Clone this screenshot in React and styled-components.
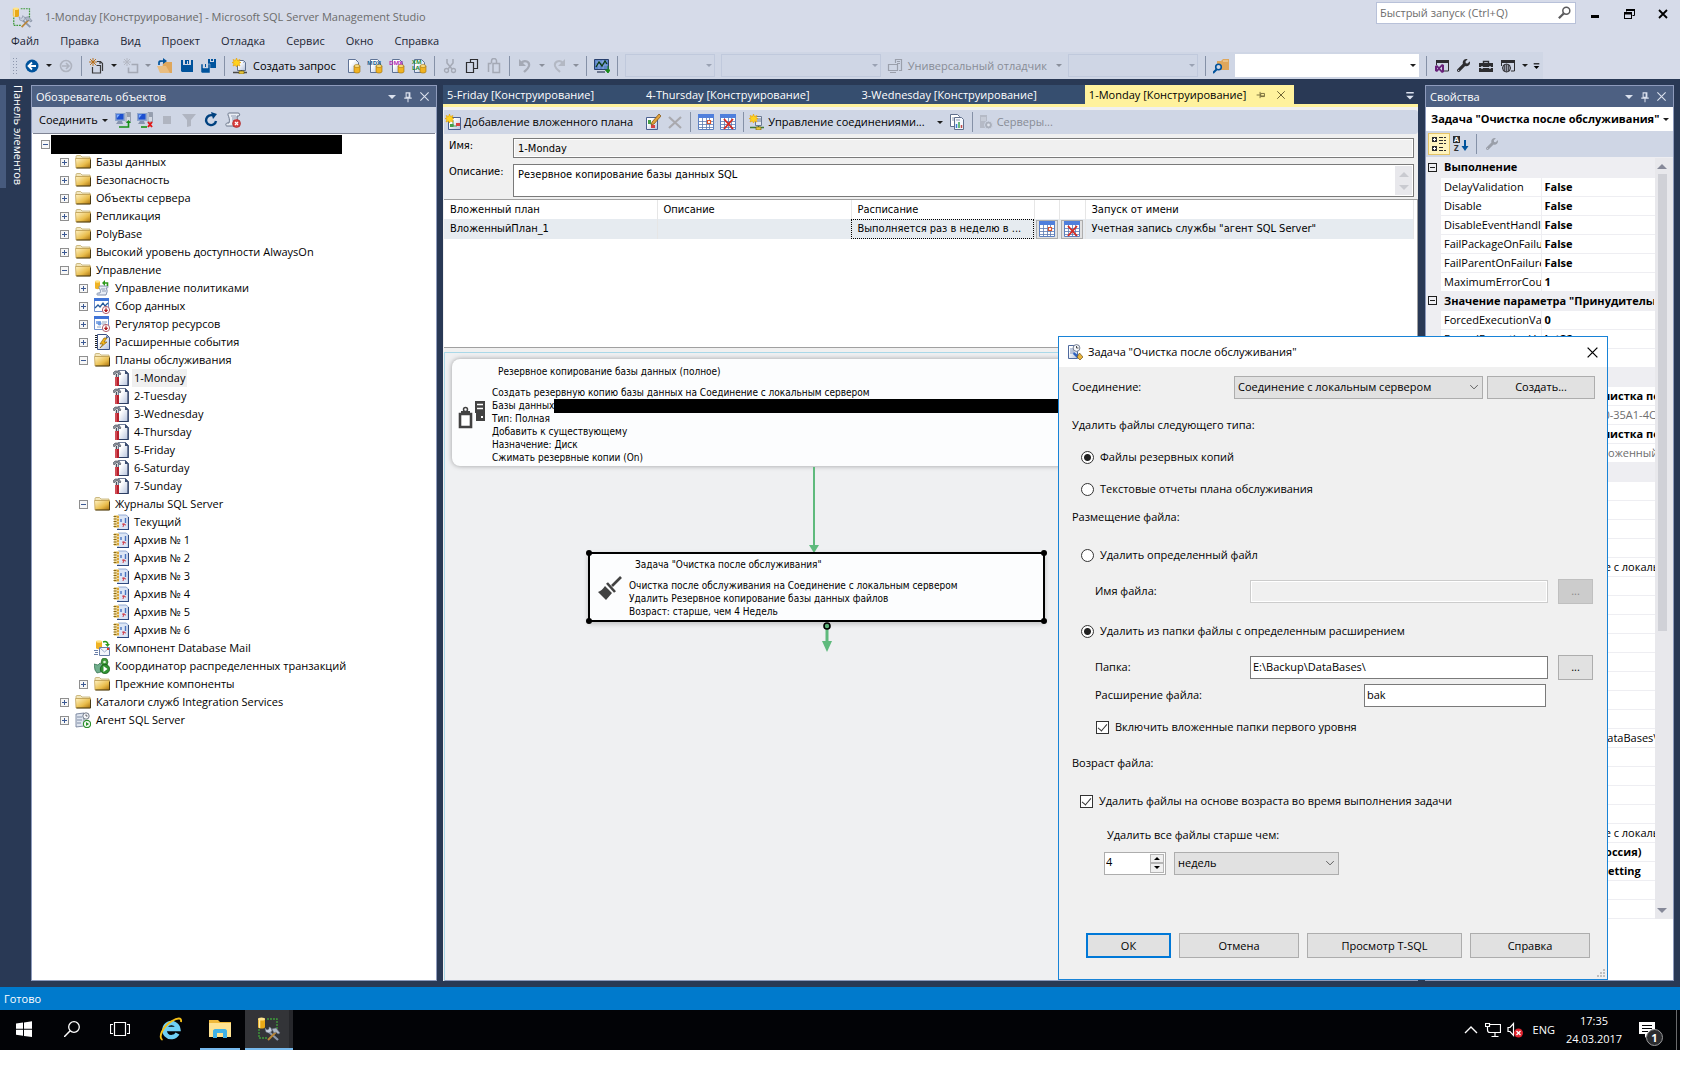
import React, { useState } from 'react'
import styled, { createGlobalStyle, css } from 'styled-components'
import { FaWrench } from 'react-icons/fa'

const GlobalStyle = createGlobalStyle`
  * {
    box-sizing: border-box;
  }

  body {
    margin: 0;
    background: #fff;
    color: #000;
    font-family: "Open Sans", "Noto Sans", sans-serif;
    font-size: 11px;
    line-height: 16px;
  }

  button, input, select, textarea {
    font: inherit;
    color: inherit;
    margin: 0;
    border-radius: 0;
    outline: none;
  }
`

const formFont = '"DejaVu Sans Condensed", "Open Sans", sans-serif'

/* ---------- icons ---------- */

const Svg = styled.svg`
  display: block;
  flex: none;
`

const GradientDefs = styled.svg`
  position: absolute;
  width: 0;
  height: 0;
`

const page = <path d="M3.5 1.5h7l3 3v10h-10z" fill="url(#pageFill)" stroke="#5f7396" />
const star = <path d="M4.5 0l1 2.5 2.5-1-1 2.5 2 .5-2 1 1 2.5-2.5-1-1 2-1-2-2.5 1 1-2.5-2-1 2-.5-1-2.5 2.5 1z" fill="#ffd21e" stroke="#e8a000" strokeWidth=".6" />
const cylinder = (
  <g>
    <path d="M9 8v5.5c0 2 6 2 6 0V8z" fill="#f0b323" stroke="#9a6b08" strokeWidth=".6" />
    <ellipse cx="12" cy="8" rx="3" ry="1.4" fill="#ffe48a" stroke="#9a6b08" strokeWidth=".6" />
  </g>
)
const calendar = (
  <g>
    <path d="M.5.5h15v15H.5z" fill="#fff" stroke="#5b7fc0" />
    <path d="M0 0h16v4H0z" fill="#4f7fdc" />
    <path d="M1 7.5h14M1 10.5h14M1 13.5h14M4.5 4v11M8.5 4v11M11.5 4v11" stroke="#5c78b0" strokeWidth=".8" />
  </g>
)
const monitorPair = (
  <g>
    <path d="M0 1h10v8H0z" fill="#8fa6cc" />
    <path d="M1.5 2h7v5.5h-7z" fill="#1c4fd0" />
    <path d="M2 2.5h3L2 6z" fill="#7fb0ff" />
    <path d="M3 9h4l1 3H1z" fill="#8795b0" />
    <path d="M11 .5h4.500v9.500H11z" fill="#d3d8e2" stroke="#7c8799" strokeWidth=".7" />
    <path d="M12 2h3M12 4h3" stroke="#59657a" />
  </g>
)
const chartWindow = (
  <g>
    <path d="M.5.5h14v13H.5z" fill="#fff" stroke="#6d8fcf" />
    <path d="M0 0h15v3H0z" fill="#3f74d8" />
  </g>
)
const redArrowBadge = (
  <g>
    <circle cx="12" cy="12" r="3.6" fill="#fff" stroke="#b06070" />
    <path d="M12 9.5V13M10.5 12l1.5 2 1.5-2z" stroke="#b01c20" fill="#b01c20" />
  </g>
)

const icons = {
  back: <><circle cx="8" cy="8" r="6.5" fill="#00539c" /><path d="M12 8H5M8 4.5L4.5 8 8 11.5" stroke="#fff" strokeWidth="1.8" fill="none" /></>,
  forward: <><circle cx="8" cy="8" r="5.5" fill="none" stroke="#aeb3bf" strokeWidth="1.6" /><path d="M4 8h7M8 5l3 3-3 3" stroke="#aeb3bf" strokeWidth="1.6" fill="none" /></>,
  newProject: <><path d="M3.500 9v6h8V7.500h-4" fill="none" stroke="#3a3a3c" strokeWidth="1.200" /><path d="M8 3.500h3.500l2 2V13M11 3v3" fill="none" stroke="#3a3a3c" strokeWidth="1.200" /><path d="M4 0v8M0 4h8M1 1l6 6M7 1L1 7" stroke="#b5690f" strokeWidth=".9" /></>,
  addItem: <><path d="M8.5 6.5h6v8h-9v-5" fill="none" stroke="#a4a9b5" strokeWidth="1.6" /><path d="M4 0v8M0 4h8M1 1l6 6M7 1L1 7" stroke="#b4b8c3" /></>,
  openFolder: <><path d="M6 4h9v11H5z" fill="#dfa75c" /><path d="M0 8h9l4 7H3z" fill="#e9bd80" /><path d="M2 7V4.500C2 3 3 3 7 3" fill="none" stroke="#00539c" strokeWidth="1.700" /><path d="M6 0l4 3-4 3z" fill="#00539c" /></>,
  save: <path d="M2 2h2v5h8V2h2v12H3l-1-1zM6 2h4v4H9V3H8v3H6z" fill="#00539c" />,
  saveAll: <><path d="M7 1h2v3h4V1h2v9H8L7 9z" fill="#00539c" /><path d="M0 6h2v4h5V6h2v9H1l-1-1z" fill="#00539c" stroke="#cfd6e5" strokeWidth=".5" /><path d="M10 1h2v2h-2zM4 6h1v3H4z" fill="#00539c" /></>,
  newQuery: <><path d="M5.5 2.5h6l2 2v8h-8z" fill="url(#pageFill)" stroke="#5f6f8c" /><path d="M11 3l2 2h-2z" fill="#9fb0cf" /><path d="M1 14.5h14M9.5 12v2" stroke="#4a4a4a" strokeWidth="1.5" /><path d="M7 13h5v3H7z" fill="#e9c53a" stroke="#6a5a10" strokeWidth=".6" />{star}</>,
  dbQuery: <>{page}{cylinder}</>,
  mdx: <>{page}{cylinder}<text x="0" y="7" fontSize="6" fontWeight="700" fill="#1f5f8f">MDX</text></>,
  dmx: <>{page}{cylinder}<text x="0" y="7" fontSize="6" fontWeight="700" fill="#b52ab5">DMX</text></>,
  xmla: <>{page}{cylinder}<text x="1" y="6" fontSize="6" fontWeight="700" fill="#1d8a35">XM</text><text x="1" y="12" fontSize="6" fontWeight="700" fill="#1d8a35">LA</text></>,
  cut: <><path d="M5 1v4l5 6M11 1v4l-5 6" fill="none" stroke="#a4a9b5" strokeWidth="1.5" /><circle cx="4.5" cy="12.5" r="2" fill="none" stroke="#a4a9b5" strokeWidth="1.3" /><circle cx="11.5" cy="12.5" r="2" fill="none" stroke="#a4a9b5" strokeWidth="1.3" /></>,
  copy: <path d="M6.500 4.500v-3h7v9h-4M2.500 4.500h7v10h-7z" fill="none" stroke="#2d2d30" strokeWidth="1.200" />,
  paste: <><path d="M7 9.5v5h6.5v-9H7z" fill="none" stroke="#a4a9b5" strokeWidth="1.5" /><path d="M2.5 14V5.5h3M5.5 5V3a2.500 2.500 0 015 0v2" fill="none" stroke="#a4a9b5" strokeWidth="1.5" /></>,
  undo: <><path d="M4 5c4-4 9-1 8 3-1 3-3 4-5 6" fill="none" stroke="#a4a9b5" strokeWidth="2.2" /><path d="M2 1v7h7z" fill="#a4a9b5" /></>,
  redo: <><path d="M12 5C8 1 3 4 4 8c1 3 3 4 5 6" fill="none" stroke="#b3b8c3" strokeWidth="2" /><path d="M14 1v7H7z" fill="#b3b8c3" /></>,
  activity: <><path d="M.5 1.5h14v10H.5z" fill="#5d86c9" stroke="#28406e" /><path d="M2 4h11M2 7h11M5 2v9M9 2v9" stroke="#a9c3f0" strokeWidth=".6" /><path d="M2 9l3-5 3 4 3-5 2 3" fill="none" stroke="#0c3b14" strokeWidth="1.3" /><path d="M3 14h8" stroke="#6e7890" strokeWidth="2" /><path d="M14 8v6M11.5 12l2.500 3 2-3z" stroke="#1a8a1a" fill="#1a8a1a" /></>,
  debugger: <path d="M1.5 6.5h9v6h-9zM3 14.5h6M8.5 5V1.5h6v11H12M10 3.5h3M10 5.5h3" fill="none" stroke="#9a9fab" strokeWidth="1.2" />,
  findFolder: <><path d="M4 3h4l2-2h6v11H4z" fill="#dfa75c" /><path d="M10 3h5" stroke="#f3d9b0" /><circle cx="5.500" cy="9" r="2.800" fill="#cfd6e5" stroke="#00539c" strokeWidth="1.600" /><path d="M3.500 11.500L0 15" stroke="#00539c" strokeWidth="2" /></>,
  vsWindow: <><path d="M2 2h13v3H2z" fill="#2d2d30" /><path d="M2.5 7V3M14.5 3v10H10" fill="none" stroke="#2d2d30" /><path d="M1 8l2-1 2 2 3-3 2 1v7l-2 1-3-3-2 2-2-1z" fill="#68217a" /><path d="M3 9.5v2l1-1zM8 8.5v4l-2-2z" fill="#cfd6e5" /></>,
  toolbox: <><path d="M5.5 5V3.500h5V5" fill="none" stroke="#2d2d30" strokeWidth="1.4" /><path d="M1 5h14v4H1zM1 10h14v4H1z" fill="#2d2d30" /><path d="M4 8v3M12 8v3" stroke="#cfd6e5" strokeWidth="1.3" /></>,
  webWindow: <><path d="M1 2h14v3H1z" fill="#2d2d30" /><path d="M1.5 3v5M14.5 3v10H11" fill="none" stroke="#2d2d30" /><circle cx="6.5" cy="10" r="4" fill="#cfd6e5" stroke="#2d2d30" /><path d="M2.5 10h8M6.5 6v8M3 8h7M3 12h7M4.5 7v6M8.5 7v6" stroke="#2d2d30" strokeWidth=".7" /></>,
  connect: <>{monitorPair}<path d="M4 15h9.5V9" fill="none" stroke="#169016" strokeWidth="1.6" /><path d="M11 11l2.500-3 2.500 3z" fill="#169016" /></>,
  disconnect: <>{monitorPair}<path d="M4 15h6" stroke="#169016" strokeWidth="1.6" /><path d="M11 10l4 5M15 10l-4 5" stroke="#e01818" strokeWidth="2" /></>,
  stop: <path d="M4 4h8v8H4z" fill="#b0b5c1" />,
  filter: <path d="M1 2h14l-5 6v6l-4 1V8z" fill="#b0b5c1" />,
  refresh: <><path d="M13 9a5 5 0 11-3-5.500" fill="none" stroke="#00417f" strokeWidth="2.4" /><path d="M8 0l6 2-4 5z" fill="#00417f" /></>,
  scriptError: <><path d="M4 1h9c2 0 2 2 1 3h-2c1 4 0 7-2 10H2c-2 0-1-3 0-3h2C5 8 4 5 3 3c0-1 0-2 1-2z" fill="#e9edf4" stroke="#606b80" strokeWidth=".9" /><path d="M6 4h5M7 6h5M7 8h3" stroke="#8f9bb3" /><circle cx="11.5" cy="11.5" r="4" fill="#d94040" stroke="#a02020" strokeWidth=".6" /><path d="M10 10l3 3M13 10l-3 3" stroke="#fff" strokeWidth="1.3" /></>,
  folder: <><path d="M1 4.500V2.500C1 2 1.500 1.500 2 1.500h3.500L7 3h8v2z" fill="#f3e7bd" stroke="#b9a15a" strokeWidth=".7" /><path d="M.5 4.500h15v9.500H1z" fill="url(#folderFill)" stroke="#b08c38" strokeWidth=".6" /><path d="M1.500 14H15.500V5.500" fill="none" stroke="#3d2f0c" strokeWidth=".9" /></>,
  policy: <><path d="M1 1v7c0 1.500 5 1.500 5 0V1z" fill="#f0b323" /><ellipse cx="3.5" cy="1.5" rx="2.5" ry="1.2" fill="#ffe48a" /><path d="M6 6h7c2 0 1 2 0 2h-1c2 3 1 4 0 7H4c-2 0-1-2 0-2h2c1-2 0-4-1-5 0-1 0-2 1-2z" fill="#e7ecf5" stroke="#7487a6" strokeWidth=".9" /><path d="M7 9h4M8 11h4" stroke="#8f9bb3" /><path d="M13.5 6V3H10" fill="none" stroke="#2d9a1c" strokeWidth="1.6" /><path d="M11 0v6L8 3z" fill="#2d9a1c" /></>,
  collection: <>{chartWindow}<path d="M1 10l3-3 2 2 3-4 2 3 3-3" fill="none" stroke="#24599c" strokeWidth="1.3" />{redArrowBadge}</>,
  governor: <>{chartWindow}<path d="M2 5h5v3H2z" fill="#8fb0e8" /><circle cx="5.5" cy="7.5" r="2" fill="#6b9ae0" /><path d="M8 6h5M8 8h4M3 11h4" stroke="#94a4bf" />{redArrowBadge}</>,
  events: <><path d="M3.5.5h9l3 3v12h-12z" fill="url(#pageFill)" stroke="#3b5286" /><path d="M2 1v14" stroke="#222" strokeDasharray="1 1" strokeWidth="2" /><path d="M12 1v3h3z" fill="#5c74a8" /><path d="M10 4L6 10h3l-3 4 7-6h-3l3-4z" fill="#f2b61c" stroke="#7a5606" strokeWidth=".6" /></>,
  plan: <><path d="M5.5.5h7l3 3v12h-10z" fill="url(#pageFill)" stroke="#4a5c80" strokeWidth=".8" /><path d="M15 4v11.500H6" fill="none" stroke="#2b3d62" strokeWidth="1.200" /><path d="M12 0v4h4z" fill="#3b4d70" /><path d="M0 3l2-2h4l2 3-1 1-2-2H3L1 5z" fill="#8a919c" stroke="#4a4f59" strokeWidth=".6" /><path d="M3.500 4v3" stroke="#4a4f59" strokeWidth="1.500" /><path d="M2 7h4v9H2z" fill="#b8202c" /><path d="M3 7v9" stroke="#e87880" /></>,
  log: <><path d="M5 1h8l2.500 2v12.500H5z" fill="#dbe5f5" stroke="#7f9aca" strokeWidth=".8" /><path d="M15.500 3v12.500H4" fill="none" stroke="#2f4a80" strokeWidth="1.200" /><path d="M1 1h5v13H1z" fill="#f0dca0" /><path d="M.5 2.500h3M.5 5h3M.5 7.500h3M.5 10h3M.5 12.500h3" stroke="#8a6a18" strokeWidth="1.200" /><path d="M5 2v11" stroke="#d69a20" strokeWidth="1.600" strokeDasharray="2 1" /><path d="M8 5v3M12.500 4v5" stroke="#4a74c0" strokeWidth="1.400" /><path d="M9 10l4 1M11 9l-1 4" stroke="#d0404c" /></>,
  mail: <><path d="M2 1v7c0 1.500 6 1.500 6 0V1z" fill="#f0b323" /><ellipse cx="5" cy="1.5" rx="3" ry="1.2" fill="#ffe48a" /><path d="M9 2c3-1 5 0 5 3" fill="none" stroke="#2d9a1c" strokeWidth="1.5" /><path d="M11 4h5l-2.500 3z" fill="#2d9a1c" /><path d="M5.5 7.5h10v8h-10z" fill="#f2f5fb" stroke="#6a7fa8" /><path d="M6 8l4.500 4L15 8" fill="none" stroke="#9caccb" /><path d="M13 8h2v2h-2z" fill="#e03a2a" /><path d="M0 10.5h4M1 12.5h3M0 14.5h4" stroke="#6a7fa8" /></>,
  coordinator: <><path d="M8 1l2-1 3 1 1 3-1 3-4 1-2-3z" fill="#3f9a3a" stroke="#175d18" strokeWidth=".7" /><circle cx="10.5" cy="4" r="1.3" fill="#d8f0d6" /><path d="M0 6l4 1 2-2 2 3-1 6-4 1-2-3z" fill="#6fae8c" stroke="#2b6a48" strokeWidth=".7" /><circle cx="11" cy="11" r="4.7" fill="#2f9130" stroke="#115512" strokeWidth=".7" /><path d="M9.5 8l4 3-4 3z" fill="#fff" /></>,
  agent: <><path d="M1 2l8-1v13l-8 1z" fill="#dfe5ef" stroke="#66748f" strokeWidth=".8" /><path d="M2 5h5M2 8h5M2 11h4" stroke="#7f8ca5" /><circle cx="11" cy="4" r="3.2" fill="#f4f6fa" stroke="#505a6b" strokeWidth=".8" /><path d="M11 2.5V4h1.500" fill="none" stroke="#222" strokeWidth=".7" /><circle cx="12" cy="12" r="3.6" fill="#f3faf3" stroke="#2a8f2a" strokeWidth="1.1" /><path d="M11 10l3 2-3 2z" fill="#2a8f2a" /></>,
  addSubplan: <><path d="M3.500 3.500h12v12h-12z" fill="url(#pageFill)" stroke="#4a6090" /><path d="M8 6v6h4" fill="none" stroke="#2e7d32" strokeWidth=".8" /><path d="M5 10h3.500v3H5z" fill="#43a047" /><path d="M11 9h4v3h-4z" fill="#d84343" />{star}</>,
  editSubplan: <><path d="M1.500 3.500h11v12h-11z" fill="url(#pageFill)" stroke="#4a6090" /><path d="M3 6h3v4H3z" fill="#43a047" /><path d="M6 11h4v3H6z" fill="#d84343" /><path d="M14 0l2 2-7 8-3 1 1-3z" fill="#e3a33a" stroke="#7a4a0a" strokeWidth=".7" /></>,
  remove: <path d="M2 3l12 11M14 3L2 14" stroke="#a9a9ae" strokeWidth="2.2" />,
  calendar: <>{calendar}<path d="M9.5 6.5h3v3h-3z" fill="#fff" stroke="#e0542a" strokeWidth="1.200" /></>,
  calendarRemove: <>{calendar}<path d="M4 5l9 10M13 5L4 15" stroke="#d8281e" strokeWidth="1.8" /></>,
  connections: <><path d="M6.5 2.5h6v9h-6z" fill="#e3e8f1" stroke="#6c7a93" /><path d="M8 5h4M8 7h4" stroke="#6c7a93" /><path d="M1 13.5h14M9.5 12v2" stroke="#3d7a3a" strokeWidth="1.5" /><path d="M7 13h5v3H7z" fill="#e9c53a" stroke="#6a5a10" strokeWidth=".6" />{star}</>,
  report: <><path d="M1.5.5h7l2 2v10h-9z" fill="#fff" stroke="#5f6f8c" /><path d="M5.5 3.5h7l2 2v10h-9z" fill="#f4f7fc" stroke="#5f6f8c" /><path d="M7.5 10v4" stroke="#3a7bd5" strokeWidth="1.5" /><path d="M10 8v6" stroke="#3aa655" strokeWidth="1.5" /><path d="M12.5 11v3" stroke="#c04848" strokeWidth="1.5" /><path d="M3 4h2M3 6h2M7 6h4" stroke="#8f9bb3" /></>,
  servers: <><path d="M2 1h7v13H2z" fill="#b5bac6" /><path d="M3 4h5M3 6h5" stroke="#d8dde8" /><circle cx="10.5" cy="11" r="4" fill="#aab0bc" stroke="#cfd6e5" /><circle cx="10.5" cy="11" r="1.4" fill="#dfe3ec" /></>,
  task: <><path d="M1.5 1.5h9v13h-9z" fill="url(#pageFill)" stroke="#4f6a9e" /><path d="M3 5h4M3 7h4M3 9h4" stroke="#7f93bb" /><circle cx="9.500" cy="4" r="3.400" fill="#f6f8fc" stroke="#566178" strokeWidth=".8" /><path d="M9.500 2v2h2" fill="none" stroke="#222" strokeWidth=".8" /><path d="M7 8l5 4-2 2-4-4z" fill="#2d62c0" /><path d="M12.500 9l3.500 4-3 3-3-3z" fill="#e8b33a" stroke="#5a4010" strokeWidth=".6" /></>,
  categorized: <><path d="M1 1h5v5H1zM1 10h5v5H1z" fill="#2d2d30" /><path d="M2 3.5h3M3.5 2v3M2 12.5h3M3.5 11v3" stroke="#fff" /><path d="M8 1.5h4M8 4.5h4M8 7.5h4M8 11.5h4M8 14.5h4M13 1.5h2M13 4.5h2M13 7.5h2M13 14.5h2" stroke="#2d2d30" /></>,
  alphabetical: <><path d="M0 0h7v7H0z" fill="#2d2d30" /><text x="1" y="6" fontSize="7" fontWeight="700" fill="#fff">A</text><text x="1" y="15" fontSize="8" fontWeight="700" fill="#2d2d30">Z</text><path d="M12 4v8" stroke="#00539c" strokeWidth="2" /><path d="M8.5 10h7L12 15z" fill="#00539c" /></>,
  magnifier: <><circle cx="9.5" cy="5.5" r="4" fill="none" stroke="#5a5a5c" strokeWidth="1.7" /><path d="M6.5 8.5L1 14" stroke="#5a5a5c" strokeWidth="2.6" /></>,
  minimize: <path d="M4 9h8v3H4z" fill="#000" />,
  restore: <><path d="M5.5 5.5v-2h8v6h-2" fill="none" stroke="#000" /><path d="M5 3h9v2H5z" fill="#000" /><path d="M3 6h8v7H3zM4 8.500h6V12H4z" fill="#000" fillRule="evenodd" /></>,
  close: <path d="M4 4l8 8M12 4l-8 8" stroke="currentColor" strokeWidth="1.8" />,
  thinClose: <path d="M2 2l12 12M14 2L2 14" stroke="currentColor" strokeWidth="1.6" />,
  pin: <path d="M5.5 2.5h5v6h-5zM9.5 2.5v6M3 9.5h10M8 10v5" fill="none" stroke="currentColor" strokeWidth="1.4" />,
  pinSide: <path d="M13.5 5.5h-6v5h6zM7.5 9.5h6M6.5 3v10M6 8H1" fill="none" stroke="currentColor" strokeWidth="1.4" />,
  chevron: <path d="M2 5l6 6 6-6" fill="none" stroke="#555" strokeWidth="1.5" />,
  overflow: <><path d="M3 4h10v2H3z" fill="currentColor" /><path d="M3 9h10l-5 5z" fill="currentColor" /></>,
  windows: <path d="M0 2.5l7-1v6.200H0zM8 1.400L16 .3v7.400H8zM0 8.700h7v6l-7-1zM8 8.700h8V16l-8-1z" fill="#fff" />,
  search: <><circle cx="10" cy="6" r="5.3" fill="none" stroke="#fff" strokeWidth="1.3" /><path d="M6.2 9.800L0 16" stroke="#fff" strokeWidth="1.5" /></>,
  chevronUp: <path d="M2 11l6-6 6 6" fill="none" stroke="#fff" strokeWidth="1.4" />,
  network: <path d="M5 2.500h10.500v8H5M10 11v3M6.500 14.500h7M.500 1.500h4v3h-4zM2.500 4.500V8c0 2 1 2.500 2.500 2.500" fill="none" stroke="#fff" strokeWidth="1.200" />,
  volume: <><path d="M1 5.500h2l3.500-4v12L3 9.500H1z" fill="none" stroke="#fff" strokeWidth="1.200" /><circle cx="11.5" cy="11" r="4.5" fill="#e0242f" /><path d="M9.5 9l4 4M13.5 9l-4 4" stroke="#fff" strokeWidth="1.3" /></>,
}

function Icon({ name, size = 16 }) {
  return (
    <Svg width={size} height={size} viewBox="0 0 16 16" aria-hidden="true">
      {icons[name]}
    </Svg>
  )
}

function StudioLogo({ size }) {
  return (
    <Svg width={size} height={size} viewBox="0 0 24 24" aria-hidden="true">
      <path d="M10 2h10v10M2 12v9h8" fill="none" stroke="#3f9a3a" strokeWidth="1.4" strokeDasharray="2 1" />
      <path d="M1 2v8c0 2 7 2 7 0V2z" fill="#e9a918" />
      <path d="M2.5 3v8" stroke="#ffe9a0" strokeWidth="1.5" />
      <ellipse cx="4.5" cy="2" rx="3.5" ry="1.5" fill="#ffe48a" />
      <path d="M11 14l10 9" stroke="#8b98ad" strokeWidth="2.2" />
      <path d="M8 11l2 2 2-1v-2l2 1 1 3-3 2-3-1z" fill="#c8d0de" stroke="#69748a" strokeWidth=".5" />
      <path d="M20 14l-9 9" stroke="#b98538" strokeWidth="2" />
      <path d="M15 12l4-1 4 5-2 1-2-2-2 1z" fill="#aeb7c5" stroke="#69748a" strokeWidth=".6" />
    </Svg>
  )
}

/* ---------- shared controls ---------- */

const Page = styled.div`
  display: flex;
  flex-direction: column;
  min-height: 100vh;
  padding: 0 12px 16px 0;
`

const PlainButton = styled.button`
  display: flex;
  align-items: center;
  justify-content: center;
  padding: 0;
  border: 0;
  background: none;
  white-space: nowrap;
`

const IconButton = styled(PlainButton)`
  flex: none;
  width: ${(props) => props.$width || 22}px;
  height: 22px;
`

const TextButton = styled(PlainButton)`
  flex: none;
  gap: 5px;
  padding: 0 6px 0 3px;
  color: ${(props) => (props.disabled ? '#888c96' : '#000')};
`

const CaretButton = styled(PlainButton)`
  flex: none;
  width: 12px;
  height: 22px;

  &::before {
    content: "";
    border: 3px solid transparent;
    border-top-color: ${(props) => (props.disabled ? '#8a8f9b' : '#1e1e1e')};
    border-bottom: 0;
  }
`

const Separator = styled.span`
  flex: none;
  width: 1px;
  height: 20px;
  margin: 0 4px;
  background: #8591a7;
`

/* ---------- window chrome ---------- */

const Chrome = styled.header`
  background: #d6dbe9;
`

const TitleBar = styled.div`
  display: flex;
  align-items: center;
  height: 32px;
  padding: 2px 0 0 12px;
`

const WindowTitle = styled.h1`
  flex: 1;
  margin: 0 0 0 12px;
  font-size: 11px;
  font-weight: 400;
  color: #6b6b6b;
`

const QuickLaunch = styled.label`
  display: flex;
  align-items: center;
  align-self: flex-start;
  width: 200px;
  height: 22px;
  padding: 0 3px;
  margin-right: 2px;
  border: 1px solid #b8c1d9;
  background: #fff;

  input {
    flex: 1;
    min-width: 0;
    padding: 0;
    border: 0;
    background: none;
  }

  input::placeholder {
    color: #6d6d6d;
    opacity: 1;
  }
`

const WindowButton = styled(IconButton)`
  align-self: flex-start;
  width: 34px;
  height: 24px;
`

const MenuBar = styled.nav`
  display: flex;
  gap: 1px;
  height: 20px;
  padding: 0 0 2px 1px;
`

const MenuItem = styled(PlainButton)`
  padding: 0 10px;
  color: #1b2534;
`

const ToolStrip = styled.div`
  display: flex;
  align-items: center;
  width: fit-content;
  max-width: 100%;
  height: 27px;
  margin-left: 10px;
  background: #cfd6e5;
`

const Grip = styled.span`
  width: 5px;
  height: 18px;
  margin: 0 4px 0 2px;
  background-image: radial-gradient(#8d97ad 1px, transparent 1px);
  background-size: 3px 3px;
`

const Combo = styled.span`
  position: relative;
  display: flex;
  flex: none;
  width: ${(props) => props.$width}px;
  height: 23px;
  margin: 0 3px;

  select {
    width: 100%;
    border: 1px solid ${(props) => (props.$active ? '#fff' : '#b9c3d8')};
    background: ${(props) => (props.$active ? '#fff' : 'transparent')};
    appearance: none;
  }

  &::after {
    content: "";
    position: absolute;
    top: 10px;
    right: 3px;
    border: 3px solid transparent;
    border-top-color: ${(props) => (props.$active ? '#1e1e1e' : '#9aa2b3')};
    border-bottom: 0;
  }
`

/* ---------- panels ---------- */

const Workspace = styled.main`
  position: relative;
  display: flex;
  flex: 1;
  padding: 6px;
  padding-left: 0;
  background: #293955;
`

const SideStrip = styled.div`
  flex: none;
  width: 31px;
`

const SideTab = styled.button`
  height: 103px;
  padding: 0 5px;
  border: 0;
  border-left: 6px solid #465a7d;
  background: none;
  color: #fff;
  line-height: 14px;
  text-align: left;
  writing-mode: vertical-rl;
  white-space: nowrap;
`

const Panel = styled.section`
  display: flex;
  flex: none;
  flex-direction: column;
  width: ${(props) => props.$width}px;
  border: 1px solid #8e9bbc;
  background: #fff;
`

const PanelHeader = styled.div`
  display: flex;
  align-items: center;
  height: 21px;
  padding: 0 4px;
  background: #4d6082;
  color: #fff;

  h2 {
    flex: 1;
    margin: 0;
    font-size: 11px;
    font-weight: 400;
  }

  button {
    width: 16px;
    color: #dbe1ee;
  }

  ${CaretButton}::before {
    border-width: 4px 4px 0;
    border-top-color: #dbe1ee;
  }
`

const PanelTools = styled.div`
  display: flex;
  align-items: center;
  height: 26px;
  padding: 0 4px 0 2px;
  background: #cfd6e5;

  ${TextButton} {
    padding: 0 1px 0 5px;
  }

  ${CaretButton} {
    margin-right: 1px;
  }
`

function PanelTitle({ children }) {
  return (
    <PanelHeader>
      <h2>{children}</h2>
      <CaretButton aria-label="Положение окна" />
      <IconButton aria-label="Закрепить"><Icon name="pin" size={12} /></IconButton>
      <IconButton aria-label="Закрыть"><Icon name="thinClose" size={11} /></IconButton>
    </PanelHeader>
  )
}

/* ---------- object explorer ---------- */

const Tree = styled.ul`
  flex: 1;
  margin: 0 1px;
  padding: 1px 0 0 8px;
  border-top: 1px solid #7f8494;
  list-style: none;
`

const TreeRow = styled.li`
  display: flex;
  align-items: center;
  height: 18px;
  padding-left: ${(props) => props.$level * 19}px;
`

const ExpanderSlot = styled.span`
  flex: none;
  width: 9px;
  margin-right: 6px;
`

const Expander = styled.button`
  display: block;
  width: 9px;
  height: 9px;
  padding: 0;
  border: 1px solid #8f8f8f;
  background:
    linear-gradient(#3c5a94, #3c5a94) center / 5px 1px no-repeat,
    linear-gradient(#3c5a94, #3c5a94) center / ${(props) => (props.$open ? 0 : 1)}px 5px no-repeat,
    #f7f7f7;
`

const TreeLabel = styled.span`
  margin-left: 3px;
  padding: 0 2px;
  line-height: 18px;
  background: ${(props) => (props.$selected ? '#f0f0f0' : 'none')};
  white-space: nowrap;
`

const Redacted = styled.span`
  display: inline-block;
  width: ${(props) => props.$width}px;
  height: ${(props) => props.$height}px;
  background: #000;

  ${Expander} + & {
    margin-left: 1px;
  }
`

const treeItems = [
  { level: 1, icon: 'folder', label: 'Базы данных', open: false },
  { level: 1, icon: 'folder', label: 'Безопасность', open: false },
  { level: 1, icon: 'folder', label: 'Объекты сервера', open: false },
  { level: 1, icon: 'folder', label: 'Репликация', open: false },
  { level: 1, icon: 'folder', label: 'PolyBase', open: false },
  { level: 1, icon: 'folder', label: 'Высокий уровень доступности AlwaysOn', open: false },
  { level: 1, icon: 'folder', label: 'Управление', open: true },
  { level: 2, icon: 'policy', label: 'Управление политиками', open: false },
  { level: 2, icon: 'collection', label: 'Сбор данных', open: false },
  { level: 2, icon: 'governor', label: 'Регулятор ресурсов', open: false },
  { level: 2, icon: 'events', label: 'Расширенные события', open: false },
  { level: 2, icon: 'folder', label: 'Планы обслуживания', open: true },
  { level: 3, icon: 'plan', label: '1-Monday', selected: true },
  { level: 3, icon: 'plan', label: '2-Tuesday' },
  { level: 3, icon: 'plan', label: '3-Wednesday' },
  { level: 3, icon: 'plan', label: '4-Thursday' },
  { level: 3, icon: 'plan', label: '5-Friday' },
  { level: 3, icon: 'plan', label: '6-Saturday' },
  { level: 3, icon: 'plan', label: '7-Sunday' },
  { level: 2, icon: 'folder', label: 'Журналы SQL Server', open: true },
  { level: 3, icon: 'log', label: 'Текущий' },
  { level: 3, icon: 'log', label: 'Архив № 1' },
  { level: 3, icon: 'log', label: 'Архив № 2' },
  { level: 3, icon: 'log', label: 'Архив № 3' },
  { level: 3, icon: 'log', label: 'Архив № 4' },
  { level: 3, icon: 'log', label: 'Архив № 5' },
  { level: 3, icon: 'log', label: 'Архив № 6' },
  { level: 2, icon: 'mail', label: 'Компонент Database Mail' },
  { level: 2, icon: 'coordinator', label: 'Координатор распределенных транзакций' },
  { level: 2, icon: 'folder', label: 'Прежние компоненты', open: false },
  { level: 1, icon: 'folder', label: 'Каталоги служб Integration Services', open: false },
  { level: 1, icon: 'agent', label: 'Агент SQL Server', open: false },
]

function ObjectExplorer() {
  return (
    <Panel $width={406}>
      <PanelTitle>Обозреватель объектов</PanelTitle>
      <PanelTools>
        <TextButton>Соединить</TextButton>
        <CaretButton aria-label="Варианты соединения" />
        <IconButton aria-label="Подключить"><Icon name="connect" /></IconButton>
        <IconButton aria-label="Отключить"><Icon name="disconnect" /></IconButton>
        <IconButton aria-label="Остановить" disabled><Icon name="stop" /></IconButton>
        <IconButton aria-label="Фильтр" disabled><Icon name="filter" /></IconButton>
        <IconButton aria-label="Обновить"><Icon name="refresh" /></IconButton>
        <IconButton aria-label="Ошибки скрипта"><Icon name="scriptError" /></IconButton>
      </PanelTools>
      <Tree>
        <TreeRow $level={0}>
          <Expander $open aria-label="Свернуть" />
          <Redacted $width={291} $height={19} />
        </TreeRow>
        {treeItems.map((item) => (
          <TreeRow key={item.label} $level={item.level}>
            <ExpanderSlot>
              {item.open !== undefined && <Expander $open={item.open} aria-label={item.label} />}
            </ExpanderSlot>
            <Icon name={item.icon} />
            <TreeLabel $selected={item.selected}>{item.label}</TreeLabel>
          </TreeRow>
        ))}
      </Tree>
    </Panel>
  )
}

/* ---------- document area ---------- */

const Document = styled.section`
  display: flex;
  flex: 1;
  flex-direction: column;
  min-width: 0;
  margin: 0 7px 0 6px;
`

const TabRow = styled.div`
  display: flex;
  height: 19px;
  color: #fff;
`

const Tab = styled(PlainButton)`
  flex: none;
  justify-content: flex-start;
  gap: 10px;
  padding: 0 8px 0 4px;
  background: ${(props) => (props.$active ? '#fff29d' : '#364e6f')};
  color: ${(props) => (props.$active ? '#000' : '#fff')};

  svg {
    color: #6f6535;
    visibility: ${(props) => (props.$active ? 'visible' : 'hidden')};
  }
`

const TabOverflow = styled(IconButton)`
  width: 16px;
  height: 19px;
  margin-left: auto;
  color: #dbe1ee;
`

const DocumentBody = styled.div`
  display: flex;
  flex: 1;
  flex-direction: column;
  padding: 3px 0 0 1px;
  border-top: 3px solid #fff29d;
  background: #f0f0f0;
`

const DocumentTools = styled.div`
  display: flex;
  align-items: center;
  height: 24px;
  border-radius: 0 3px 3px 0;
  background: #cfd6e5;

  ${TextButton} {
    gap: 3px;
    padding: 0 9px 0 1px;
  }
`

const PlanForm = styled.form`
  display: grid;
  grid-template-columns: 64px 1fr;
  gap: 6px 0;
  padding: 4px 4px 2px 5px;
  font-family: ${formFont};

  input {
    display: block;
    width: 100%;
    height: 20px;
    padding: 0 4px;
    border: 1px solid #7a7a7a;
    background: #f0f0f0;
    box-shadow: inset 0 0 0 1px #fff;
  }
`

const DescriptionBox = styled.div`
  display: flex;
  height: 33px;
  padding: 1px;
  border: 1px solid #7a7a7a;
  background: #fff;

  textarea {
    flex: 1;
    padding: 1px 3px;
    border: 0;
    background: none;
    resize: none;
    overflow: hidden;
  }
`

const BoxScroll = styled.span`
  display: flex;
  flex-direction: column;
  justify-content: space-between;
  align-items: center;
  width: 17px;
  padding: 6px 0 5px;
  background: #e8e8ec;

  &::before, &::after {
    content: "";
    border: 5px solid transparent;
  }

  &::before {
    border-top: 0;
    border-bottom-color: #c9cad0;
  }

  &::after {
    border-bottom: 0;
    border-top-color: #c9cad0;
  }
`

const SubplanArea = styled.div`
  height: 149px;
  border-top: 1px solid #a0a0a0;
  border-right: 1px solid #a0a0a0;
  border-bottom: 1px solid #a0a0a0;
  padding-right: 3px;
  background: #fff;
  font-family: ${formFont};
`

const SubplanTable = styled.table`
  width: 100%;
  border-collapse: collapse;
  table-layout: fixed;

  th, td {
    padding: 0 0 0 6px;
    border-right: 1px solid #e6e6e6;
    font-weight: 400;
    text-align: left;
    white-space: nowrap;
    overflow: hidden;
  }

  th {
    height: 19px;
  }

  td {
    height: 20px;
    background: #e6ebf0;
  }
`

const ScheduleCell = styled.td`
  outline: 1px dotted #000;
  outline-offset: -1px;
`

const ButtonCell = styled.td`
  && {
    padding: 0 1px;
  }

  button {
    width: 22px;
    height: 19px;
    border: 1px solid #adadad;
    background: #e1e1e1;
  }
`

const Canvas = styled.div`
  position: relative;
  flex: 1;
  margin-top: 4px;
  border: 1px solid #a9d8e8;
  border-right: 0;
  border-bottom-color: #8e9bbc;
  background: #eff0f2;
  overflow: hidden;
`

const Connectors = styled.svg`
  position: absolute;
  inset: 0;
  width: 100%;
  height: 100%;
`

const TaskCard = styled.article`
  position: absolute;
  left: ${(props) => props.$x}px;
  top: ${(props) => props.$y}px;
  display: flex;
  align-items: center;
  width: ${(props) => props.$width}px;
  padding: ${(props) => (props.$selected ? '4px 0 2px' : '6px 0 2px')};
  border-radius: 8px;
  background: #fcfdfe;
  box-shadow: 0 0 5px rgba(0, 0, 0, 0.35);
  font-family: ${formFont};
  font-size: 10px;
  line-height: 13px;
  white-space: nowrap;

  ${(props) => props.$selected && css`
    border: 2px solid #000;
    border-radius: 3px;
    box-shadow: 0 2px 5px rgba(0, 0, 0, 0.2);
  `}

  h3 {
    margin: 0 0 8px 6px;
    font-size: 10px;
    font-weight: 400;
  }

  p {
    display: flex;
    height: 13px;
    margin: 0;
  }
`

const CardIcon = styled.div`
  display: flex;
  flex: none;
  justify-content: center;
  width: ${(props) => (props.$selected ? 39 : 40)}px;
`

const Handle = styled.i`
  position: absolute;
  width: 6px;
  height: 6px;
  border-radius: 3px;
  background: #000;
  ${(props) => props.$side}: -4px;
  ${(props) => props.$edge}: -4px;
`

const tabs = ['5-Friday', '4-Thursday', '3-Wednesday', '1-Monday']

function MaintenancePlan() {
  return (
    <Document>
      <TabRow>
        {tabs.map((tab) => (
          <Tab key={tab} $active={tab === '1-Monday'}>
            {tab} [Конструирование]
            <Icon name="pinSide" size={10} />
            <Icon name="thinClose" size={10} />
          </Tab>
        ))}
        <TabOverflow aria-label="Список вкладок"><Icon name="overflow" size={12} /></TabOverflow>
      </TabRow>
      <DocumentBody>
        <DocumentTools>
          <TextButton><Icon name="addSubplan" />Добавление вложенного плана</TextButton>
          <IconButton aria-label="Изменить"><Icon name="editSubplan" /></IconButton>
          <IconButton aria-label="Удалить" disabled><Icon name="remove" /></IconButton>
          <Separator />
          <IconButton aria-label="Расписание"><Icon name="calendar" /></IconButton>
          <IconButton aria-label="Удалить расписание"><Icon name="calendarRemove" /></IconButton>
          <Separator />
          <TextButton><Icon name="connections" />Управление соединениями...</TextButton>
          <CaretButton aria-label="Соединения" />
          <IconButton aria-label="Отчеты"><Icon name="report" /></IconButton>
          <Separator />
          <TextButton disabled><Icon name="servers" />Серверы...</TextButton>
        </DocumentTools>
        <PlanForm>
          <label htmlFor="planName">Имя:</label>
          <input id="planName" defaultValue="1-Monday" readOnly />
          <label htmlFor="planDescription">Описание:</label>
          <DescriptionBox>
            <textarea id="planDescription" defaultValue="Резервное копирование базы данных SQL" />
            <BoxScroll />
          </DescriptionBox>
        </PlanForm>
        <SubplanArea>
          <SubplanTable>
            <colgroup>
              <col width="213" />
              <col width="194" />
              <col width="183" />
              <col width="25" />
              <col width="26" />
              <col />
            </colgroup>
            <thead>
              <tr>
                <th>Вложенный план</th>
                <th>Описание</th>
                <th>Расписание</th>
                <th />
                <th />
                <th>Запуск от имени</th>
              </tr>
            </thead>
            <tbody>
              <tr>
                <td>ВложенныйПлан_1</td>
                <td />
                <ScheduleCell>Выполняется раз в неделю в ...</ScheduleCell>
                <ButtonCell><PlainButton aria-label="Расписание"><Icon name="calendar" /></PlainButton></ButtonCell>
                <ButtonCell><PlainButton aria-label="Удалить расписание"><Icon name="calendarRemove" /></PlainButton></ButtonCell>
                <td>Учетная запись службы "агент SQL Server"</td>
              </tr>
            </tbody>
          </SubplanTable>
        </SubplanArea>
        <Canvas>
          <TaskCard $x={7} $y={6} $width={724}>
            <CardIcon>
              <Svg width="30" height="30" viewBox="0 0 30 30" aria-hidden="true">
                <path d="M18 1h10v20h-9v-8h-1z" fill="#424242" />
                <path d="M20 4.5h6M20 8.5h6" stroke="#fff" strokeWidth="1.5" />
                <path d="M24 16h2v2h-2z" fill="#fff" />
                <path d="M3 14h11v13H3z" fill="#fff" stroke="#424242" strokeWidth="2.6" />
                <path d="M4 11h9v3H4z" fill="#424242" />
                <circle cx="8.5" cy="9.5" r="2" fill="none" stroke="#424242" strokeWidth="1.5" />
              </Svg>
            </CardIcon>
            <div>
              <h3>Резервное копирование базы данных (полное)</h3>
              <p>Создать резервную копию базы данных на Соединение с локальным сервером</p>
              <p>Базы данных<Redacted $width={600} $height={14} /></p>
              <p>Тип: Полная</p>
              <p>Добавить к существующему</p>
              <p>Назначение: Диск</p>
              <p>Сжимать резервные копии (On)</p>
            </div>
          </TaskCard>
          <Connectors aria-hidden="true">
            <path d="M369 114v80" stroke="#5fba7d" strokeWidth="2" />
            <path d="M364 192h10l-5 8z" fill="#5fba7d" />
            <path d="M382 276v14" stroke="#5fba7d" strokeWidth="3" />
            <path d="M377 288h10l-5 11z" fill="#5fba7d" />
            <circle cx="382" cy="273" r="3" fill="#5fba7d" stroke="#000" strokeWidth="1.6" />
          </Connectors>
          <TaskCard $x={143} $y={199} $width={457} $selected>
            <CardIcon $selected>
              <Svg width="24" height="24" viewBox="0 0 24 24" aria-hidden="true">
                <path d="M23 1L14 10" stroke="#424242" strokeWidth="2.6" />
                <path d="M9 7l8 9" stroke="#424242" strokeWidth="2.6" />
                <path d="M7 10l7 7-6 7-8-8c3-1 5-3 7-6z" fill="#424242" />
              </Svg>
            </CardIcon>
            <div>
              <h3>Задача "Очистка после обслуживания"</h3>
              <p>Очистка после обслуживания на Соединение с локальным сервером</p>
              <p>Удалить Резервное копирование базы данных файлов</p>
              <p>Возраст: старше, чем 4 Недель</p>
            </div>
            <Handle $side="left" $edge="top" />
            <Handle $side="right" $edge="top" />
            <Handle $side="left" $edge="bottom" />
            <Handle $side="right" $edge="bottom" />
          </TaskCard>
        </Canvas>
      </DocumentBody>
    </Document>
  )
}

/* ---------- properties ---------- */

const ObjectPicker = styled(PlainButton)`
  justify-content: space-between;
  height: 24px;
  padding-left: 5px;
  font-weight: 700;

  &::after {
    content: "";
    margin-right: 4px;
    border: 3px solid transparent;
    border-top-color: #1e1e1e;
    border-bottom: 0;
  }
`

const ViewButton = styled(IconButton)`
  ${(props) => props.$active && css`
    border: 1px solid #e5c365;
    background: #fff4bf;
  `}
`

const PropertyArea = styled.div`
  display: flex;
  padding-top: 1px;
  background: #eeeef2;
`

const PropertyTable = styled.table`
  flex: 1;
  min-width: 0;
  width: 100%;
  border-collapse: collapse;
  table-layout: fixed;
  background: #fff;

  th, td {
    height: 19px;
    padding: 0 3px;
    overflow: hidden;
    font-weight: 400;
    text-align: left;
    white-space: nowrap;
    line-height: 18px;
    border-bottom: 1px solid #eeeef2;
  }

  th {
    border-right: 1px solid #eeeef2;
    padding-right: 0;
  }

  tr > :first-child {
    padding: 0 0 0 2px;
    background: #eeeef2;
  }

  ${Expander} {
    border-color: #1e1e1e;
    background: linear-gradient(#1e1e1e, #1e1e1e) center / 5px 1px no-repeat;
  }
`

const CategoryCell = styled.th`
  && {
    background: #eeeef2;
    font-weight: 700;
  }
`

const ValueCell = styled.td`
  && {
    color: ${(props) => (props.$muted ? '#6d6d6d' : '#000')};
    font-weight: ${(props) => (props.$bold ? 700 : 400)};
  }
`

const ScrollTrack = styled.div`
  display: flex;
  flex: none;
  flex-direction: column;
  align-items: center;
  width: 18px;
  padding: 6px 4px 6px 0;
  background: #e8e8ec;

  &::before, &::after {
    content: "";
    border: 5px solid transparent;
  }

  &::before {
    border-top: 0;
    border-bottom-color: #868999;
  }

  &::after {
    margin-top: auto;
    border-bottom: 0;
    border-top-color: #868999;
  }
`

const ScrollThumb = styled.span`
  width: 9px;
  height: 61%;
  margin-top: 5px;
  background: #d0d1d7;
`

const properties = [
  { category: 'Выполнение' },
  { name: 'DelayValidation', value: 'False', bold: true },
  { name: 'Disable', value: 'False', bold: true },
  { name: 'DisableEventHandlers', value: 'False', bold: true },
  { name: 'FailPackageOnFailure', value: 'False', bold: true },
  { name: 'FailParentOnFailure', value: 'False', bold: true },
  { name: 'MaximumErrorCount', value: '1', bold: true },
  { category: 'Значение параметра "Принудительное выполнение"' },
  { name: 'ForcedExecutionValue', value: '0', bold: true },
  { name: 'ForcedExecutionValueType', value: 'Int32', bold: true },
  {},
  { category: '' },
  { value: 'Задача "Очистка после обслуживания"', bold: true },
  { value: '{8D2CADE40-35A1-4CC2}', muted: true },
  { value: 'Задача "Очистка после обслуживания"', bold: true },
  { value: '\\Package\\ВложенныйПлан_1', muted: true },
  { category: '' },
  {}, {}, {}, {},
  { value: 'Соединение с локальным сервером' },
  {}, {}, {}, {}, {}, {}, {}, {},
  { value: 'E:\\Backup\\DataBases\\' },
  {}, {}, {}, {},
  { value: 'Соединение с локальным сервером' },
  { value: 'Русский (Россия)', bold: true },
  { value: 'UseParentSetting', bold: true },
  {}, {},
]

function Properties() {
  return (
    <Panel $width={249}>
      <PanelTitle>Свойства</PanelTitle>
      <ObjectPicker>Задача "Очистка после обслуживания"</ObjectPicker>
      <PanelTools>
        <ViewButton $active aria-label="По категориям"><Icon name="categorized" /></ViewButton>
        <ViewButton aria-label="По алфавиту"><Icon name="alphabetical" /></ViewButton>
        <Separator />
        <IconButton aria-label="Страницы свойств" disabled><FaWrench size={12} color="#9a9fa9" /></IconButton>
      </PanelTools>
      <PropertyArea>
        <PropertyTable>
          <colgroup>
            <col width="15" />
            <col width="100" />
            <col />
          </colgroup>
          <tbody>
            {properties.map((row, i) => (
              <tr key={i}>
                <td>{row.category && <Expander $open aria-label={row.category} />}</td>
                {row.category !== undefined ? (
                  <CategoryCell colSpan={2}>{row.category}</CategoryCell>
                ) : (
                  <>
                    <th>{row.name}</th>
                    <ValueCell $bold={row.bold} $muted={row.muted}>{row.value}</ValueCell>
                  </>
                )}
              </tr>
            ))}
          </tbody>
        </PropertyTable>
        <ScrollTrack><ScrollThumb /></ScrollTrack>
      </PropertyArea>
    </Panel>
  )
}

/* ---------- cleanup task dialog ---------- */

const DialogBox = styled.section`
  position: absolute;
  top: 257px;
  right: 72px;
  width: 550px;
  border: 1px solid #1883d7;
  background: #f0f0f0;
`

const DialogHeader = styled.div`
  display: flex;
  align-items: center;
  gap: 5px;
  height: 30px;
  padding: 0 4px 0 8px;
  background: #fff;

  h2 {
    flex: 1;
    margin: 0;
    font-size: 11px;
    font-weight: 400;
  }
`

const DialogForm = styled.form`
  padding: 8px 12px 21px 13px;
`

const Line = styled.div`
  display: flex;
  align-items: center;
  height: 24px;
  margin-top: ${(props) => props.$gap || 0}px;
  padding-left: ${(props) => props.$indent || 0}px;

  > label:first-child {
    flex: 1;
  }
`

const Choice = styled.label`
  display: flex;
  align-items: center;
  gap: 6px;
`

const Radio = styled.input.attrs({ type: 'radio' })`
  width: 13px;
  height: 13px;
  border: 1px solid #333;
  border-radius: 50%;
  background: #fff;
  appearance: none;

  &:checked {
    background: radial-gradient(circle, #222 3px, #fff 4px);
  }
`

const Checkbox = styled.input.attrs({ type: 'checkbox' })`
  display: flex;
  justify-content: center;
  width: 13px;
  height: 13px;
  border: 1px solid #333;
  background: #fff;
  appearance: none;

  &:checked::before {
    content: "";
    width: 4px;
    height: 8px;
    border: solid #333;
    border-width: 0 1px 1px 0;
    transform: rotate(40deg);
  }
`

const TextBox = styled.input`
  width: ${(props) => props.$width}px;
  height: 23px;
  padding: 0 2px 2px;
  border: 1px solid #7a7a7a;
  background: #fff;

  &:disabled {
    border-color: #ccc;
    background: #f0f0f0;
    box-shadow: inset 0 0 0 1px #fff;
  }
`

const DropDown = styled.span`
  position: relative;
  width: ${(props) => props.$width}px;

  select {
    display: block;
    width: 100%;
    height: 23px;
    padding: 0 3px;
    border: 1px solid #adadad;
    background: #e1e1e1;
    appearance: none;
  }

  svg {
    position: absolute;
    top: 6px;
    right: 4px;
    pointer-events: none;
  }
`

const Button = styled.button`
  width: ${(props) => props.$width}px;
  height: ${(props) => props.$height || 25}px;
  padding: 0;
  border: ${(props) => (props.$primary ? '2px solid #0078d7' : '1px solid #adadad')};
  background: #e1e1e1;

  &:disabled {
    border-color: #bfbfbf;
    background: #ccc;
    color: #8a8a8a;
  }
`

const CreateButton = styled(Button)`
  margin-left: 4px;
`

const BrowseButton = styled(Button)`
  margin: 0 2px 0 10px;
`

const ExtensionLine = styled(Line)`
  padding-right: 49px;
`

const Spinner = styled.span`
  display: flex;
  width: 62px;
  height: 23px;
  margin-right: 8px;
  border: 1px solid #adadad;
  background: #fff;

  input {
    flex: 1;
    min-width: 0;
    padding: 0 1px 2px;
    border: 0;
    background: none;
    appearance: textfield;
  }

  input::-webkit-inner-spin-button {
    display: none;
  }
`

const SpinButtons = styled.span`
  display: flex;
  flex-direction: column;
  width: 15px;
  padding: 1px 1px 1px 0;

  button {
    flex: 1;
    border: 1px solid #b5b5b5;
    background: #f0f0f0;
  }

  button::before {
    content: "";
    border: 3px solid transparent;
    border-top: 0;
    border-bottom-color: #000;
  }

  button:last-child::before {
    border-top: 3px solid #000;
    border-bottom: 0;
  }
`

const DialogFooter = styled.div`
  display: flex;
  gap: 8px;
  margin: 58px 0 0 14px;
`

const ResizeGrip = styled.svg`
  position: absolute;
  right: 2px;
  bottom: 2px;
`

function CleanupDialog() {
  const [fileType, setFileType] = useState('backup')
  const [location, setLocation] = useState('folder')

  return (
    <DialogBox role="dialog" aria-labelledby="dialogTitle">
      <DialogHeader>
        <Icon name="task" />
        <h2 id="dialogTitle">Задача "Очистка после обслуживания"</h2>
        <IconButton aria-label="Закрыть"><Icon name="thinClose" size={13} /></IconButton>
      </DialogHeader>
      <DialogForm onSubmit={(e) => e.preventDefault()}>
        <Line>
          <label htmlFor="connection">Соединение:</label>
          <DropDown $width={249}>
            <select id="connection"><option>Соединение с локальным сервером</option></select>
            <Icon name="chevron" size={10} />
          </DropDown>
          <CreateButton type="button" $width={108} $height={23}>Создать...</CreateButton>
        </Line>
        <Line $gap={14}>Удалить файлы следующего типа:</Line>
        <Line $gap={8} $indent={9}>
          <Choice>
            <Radio name="fileType" checked={fileType === 'backup'} onChange={() => setFileType('backup')} />
            Файлы резервных копий
          </Choice>
        </Line>
        <Line $gap={8} $indent={9}>
          <Choice>
            <Radio name="fileType" checked={fileType === 'report'} onChange={() => setFileType('report')} />
            Текстовые отчеты плана обслуживания
          </Choice>
        </Line>
        <Line $gap={4}>Размещение файла:</Line>
        <Line $gap={14} $indent={9}>
          <Choice>
            <Radio name="location" checked={location === 'file'} onChange={() => setLocation('file')} />
            Удалить определенный файл
          </Choice>
        </Line>
        <Line $gap={12} $indent={23}>
          <label htmlFor="fileName">Имя файла:</label>
          <TextBox id="fileName" $width={298} disabled={location !== 'file'} />
          <BrowseButton type="button" $width={35} disabled={location !== 'file'}>...</BrowseButton>
        </Line>
        <Line $gap={16} $indent={9}>
          <Choice>
            <Radio name="location" checked={location === 'folder'} onChange={() => setLocation('folder')} />
            Удалить из папки файлы с определенным расширением
          </Choice>
        </Line>
        <Line $gap={12} $indent={23}>
          <label htmlFor="folder">Папка:</label>
          <TextBox id="folder" $width={298} defaultValue="E:\Backup\DataBases\" />
          <BrowseButton type="button" $width={35}>...</BrowseButton>
        </Line>
        <ExtensionLine $gap={4} $indent={23}>
          <label htmlFor="extension">Расширение файла:</label>
          <TextBox id="extension" $width={182} defaultValue="bak" />
        </ExtensionLine>
        <Line $gap={8} $indent={24}>
          <Choice><Checkbox defaultChecked />Включить вложенные папки первого уровня</Choice>
        </Line>
        <Line $gap={12}>Возраст файла:</Line>
        <Line $gap={14} $indent={8}>
          <Choice><Checkbox defaultChecked />Удалить файлы на основе возраста во время выполнения задачи</Choice>
        </Line>
        <Line $gap={10} $indent={35}>
          <label htmlFor="age">Удалить все файлы старше чем:</label>
        </Line>
        <Line $gap={4} $indent={32}>
          <Spinner>
            <input id="age" type="number" defaultValue="4" />
            <SpinButtons>
              <PlainButton type="button" aria-label="Больше" />
              <PlainButton type="button" aria-label="Меньше" />
            </SpinButtons>
          </Spinner>
          <DropDown $width={165}>
            <select aria-label="Единица возраста"><option>недель</option></select>
            <Icon name="chevron" size={10} />
          </DropDown>
        </Line>
        <DialogFooter>
          <Button $width={85} $primary>ОК</Button>
          <Button type="button" $width={120}>Отмена</Button>
          <Button type="button" $width={155}>Просмотр T-SQL</Button>
          <Button type="button" $width={120}>Справка</Button>
        </DialogFooter>
      </DialogForm>
      <ResizeGrip width="8" height="8" viewBox="0 0 8 8" aria-hidden="true">
        <path d="M6 0h2v2H6zM6 3h2v2H6zM6 6h2v2H6zM3 3h2v2H3zM3 6h2v2H3zM0 6h2v2H0z" fill="#bfbfbf" />
      </ResizeGrip>
    </DialogBox>
  )
}

/* ---------- status bar and taskbar ---------- */

const StatusBar = styled.footer`
  height: 23px;
  padding: 0 4px;
  background: #007acc;
  color: #fff;
  line-height: 23px;
`

const Taskbar = styled.footer`
  display: flex;
  height: 40px;
  background: #020306;
  color: #fff;
`

const TaskButton = styled(PlainButton)`
  width: 48px;
  height: 40px;
  margin-left: ${(props) => (props.$pinned ? 3 : 0)}px;
  border-bottom: 2px solid transparent;

  ${(props) => props.$running && css`
    width: 40px;
    margin: 0 5px;
    border-bottom-color: #76b9ed;
  `}

  ${(props) => props.$active && css`
    width: 48px;
    margin: 0;
    background: #333438;
    box-shadow: inset -4px 0 #26272b;
  `}
`

const Tray = styled.div`
  display: flex;
  align-items: center;
  gap: 6px;
  margin-left: auto;
  padding-right: 3px;
`

const Language = styled.span`
  margin-left: 4px;
`

const Clock = styled.time`
  width: 66px;
  line-height: 18px;
  text-align: center;
`

const Notifications = styled(PlainButton)`
  position: relative;
  justify-content: flex-start;
  width: 44px;
  height: 40px;
  padding-left: 6px;
  border-right: 1px solid #6a6a6c;
`

const Badge = styled.span`
  position: absolute;
  top: 19px;
  left: 13px;
  width: 17px;
  height: 17px;
  border: 1px solid #9a9a9c;
  border-radius: 50%;
  background: #2b2c2f;
  font-weight: 700;
  line-height: 15px;
`

function SystemTaskbar() {
  return (
    <Taskbar>
      <TaskButton aria-label="Пуск"><Icon name="windows" /></TaskButton>
      <TaskButton aria-label="Поиск"><Icon name="search" /></TaskButton>
      <TaskButton aria-label="Представление задач">
        <Svg width="20" height="14" viewBox="0 0 20 14" aria-hidden="true">
          <path d="M4.5.5h11v13h-11zM3 2.5H.5v9H3M17 2.5h2.500v9H17" fill="none" stroke="#fff" strokeWidth="1.2" />
        </Svg>
      </TaskButton>
      <TaskButton $pinned aria-label="Internet Explorer">
        <Svg width="24" height="24" viewBox="0 0 24 24" aria-hidden="true">
          <path d="M18.500 16.500a7 7 0 11.800-4.500H7" fill="none" stroke="#6fd0f6" strokeWidth="4.400" />
          <path d="M3.500 23C-1 21 3 10 13 4c5-3 10-4 9 1" fill="none" stroke="#f5c018" strokeWidth="1.900" />
        </Svg>
      </TaskButton>
      <TaskButton $running aria-label="Проводник">
        <Svg width="22" height="20" viewBox="0 0 22 20" aria-hidden="true">
          <path d="M0 1h9l2 2h11v15H0z" fill="#f0b93a" />
          <path d="M0 4h22v14H0z" fill="#ffe391" />
          <path d="M4 19v-7c0-1 1-2 2-2h10c1 0 2 1 2 2v7h-4v-5H8v5z" fill="#3fb2e8" />
        </Svg>
      </TaskButton>
      <TaskButton $running $active aria-label="SQL Server Management Studio"><StudioLogo size={24} /></TaskButton>
      <Tray>
        <Icon name="chevronUp" />
        <Icon name="network" />
        <Icon name="volume" />
        <Language>ENG</Language>
        <Clock>17:35<br />24.03.2017</Clock>
        <Notifications aria-label="Уведомления">
          <Svg width="16" height="16" viewBox="0 0 16 16" aria-hidden="true">
            <path d="M0 0h16v12H9l-3 4v-4H0z" fill="#fff" />
            <path d="M3 3.5h10M3 6.5h10M3 9.5h6" stroke="#020306" strokeWidth="1.2" />
          </Svg>
          <Badge>1</Badge>
        </Notifications>
      </Tray>
    </Taskbar>
  )
}

function MainToolbar() {
  return (
    <ToolStrip>
      <Grip />
      <IconButton aria-label="Назад"><Icon name="back" /></IconButton>
      <CaretButton aria-label="История" />
      <IconButton aria-label="Вперед" disabled><Icon name="forward" /></IconButton>
      <Separator />
      <IconButton aria-label="Создать проект"><Icon name="newProject" /></IconButton>
      <CaretButton aria-label="Варианты проекта" />
      <IconButton aria-label="Добавить элемент" disabled><Icon name="addItem" /></IconButton>
      <CaretButton aria-label="Варианты элемента" disabled />
      <IconButton aria-label="Открыть"><Icon name="openFolder" /></IconButton>
      <IconButton aria-label="Сохранить"><Icon name="save" /></IconButton>
      <IconButton aria-label="Сохранить все"><Icon name="saveAll" /></IconButton>
      <Separator />
      <TextButton><Icon name="newQuery" />Создать запрос</TextButton>
      <IconButton aria-label="Запрос к базе данных"><Icon name="dbQuery" /></IconButton>
      <IconButton aria-label="Запрос MDX"><Icon name="mdx" /></IconButton>
      <IconButton aria-label="Запрос DMX"><Icon name="dmx" /></IconButton>
      <IconButton aria-label="Запрос XMLA"><Icon name="xmla" /></IconButton>
      <Separator />
      <IconButton aria-label="Вырезать" disabled><Icon name="cut" /></IconButton>
      <IconButton aria-label="Копировать"><Icon name="copy" /></IconButton>
      <IconButton aria-label="Вставить" disabled><Icon name="paste" /></IconButton>
      <Separator />
      <IconButton aria-label="Отменить" disabled><Icon name="undo" /></IconButton>
      <CaretButton aria-label="Список отмены" disabled />
      <IconButton aria-label="Вернуть" disabled><Icon name="redo" /></IconButton>
      <CaretButton aria-label="Список возврата" disabled />
      <Separator />
      <IconButton aria-label="Монитор активности"><Icon name="activity" /></IconButton>
      <Separator />
      <Combo $width={90}><select aria-label="Конфигурация" disabled /></Combo>
      <Combo $width={160}><select aria-label="Платформа" disabled /></Combo>
      <TextButton disabled><Icon name="debugger" />Универсальный отладчик</TextButton>
      <CaretButton aria-label="Отладчики" disabled />
      <Combo $width={130}><select aria-label="Процесс" disabled /></Combo>
      <Separator />
      <IconButton aria-label="Найти в файлах"><Icon name="findFolder" /></IconButton>
      <Combo $width={184} $active><select aria-label="Найти" /></Combo>
      <Separator />
      <IconButton aria-label="Обозреватель решений"><Icon name="vsWindow" /></IconButton>
      <IconButton aria-label="Параметры"><FaWrench size={13} color="#2d2d30" /></IconButton>
      <IconButton aria-label="Панель элементов"><Icon name="toolbox" /></IconButton>
      <IconButton aria-label="Веб-браузер"><Icon name="webWindow" /></IconButton>
      <CaretButton aria-label="Другие окна" />
      <IconButton $width={12} aria-label="Параметры панели"><Icon name="overflow" size={9} /></IconButton>
    </ToolStrip>
  )
}

const menu = ['Файл', 'Правка', 'Вид', 'Проект', 'Отладка', 'Сервис', 'Окно', 'Справка']

export default function App() {
  return (
    <Page>
      <GlobalStyle />
      <GradientDefs aria-hidden="true">
        <linearGradient id="folderFill" x1="0" y1="0" x2="1" y2="1">
          <stop offset="0" stopColor="#fff3c4" />
          <stop offset="0.6" stopColor="#e9bd4c" />
          <stop offset="1" stopColor="#a8700c" />
        </linearGradient>
        <linearGradient id="pageFill" x1="0" y1="0" x2="1" y2="1">
          <stop offset="0.3" stopColor="#fff" />
          <stop offset="1" stopColor="#b3c1dc" />
        </linearGradient>
      </GradientDefs>
      <Chrome>
        <TitleBar>
          <StudioLogo size={21} />
          <WindowTitle>1-Monday [Конструирование] - Microsoft SQL Server Management Studio</WindowTitle>
          <QuickLaunch>
            <input type="text" aria-label="Быстрый запуск" placeholder="Быстрый запуск (Ctrl+Q)" />
            <Icon name="magnifier" size={14} />
          </QuickLaunch>
          <WindowButton aria-label="Свернуть"><Icon name="minimize" /></WindowButton>
          <WindowButton aria-label="Восстановить"><Icon name="restore" /></WindowButton>
          <WindowButton aria-label="Закрыть"><Icon name="close" /></WindowButton>
        </TitleBar>
        <MenuBar>
          {menu.map((item) => <MenuItem key={item}>{item}</MenuItem>)}
        </MenuBar>
        <MainToolbar />
      </Chrome>
      <Workspace>
        <SideStrip><SideTab>Панель элементов</SideTab></SideStrip>
        <ObjectExplorer />
        <MaintenancePlan />
        <Properties />
        <CleanupDialog />
      </Workspace>
      <StatusBar>Готово</StatusBar>
      <SystemTaskbar />
    </Page>
  )
}
